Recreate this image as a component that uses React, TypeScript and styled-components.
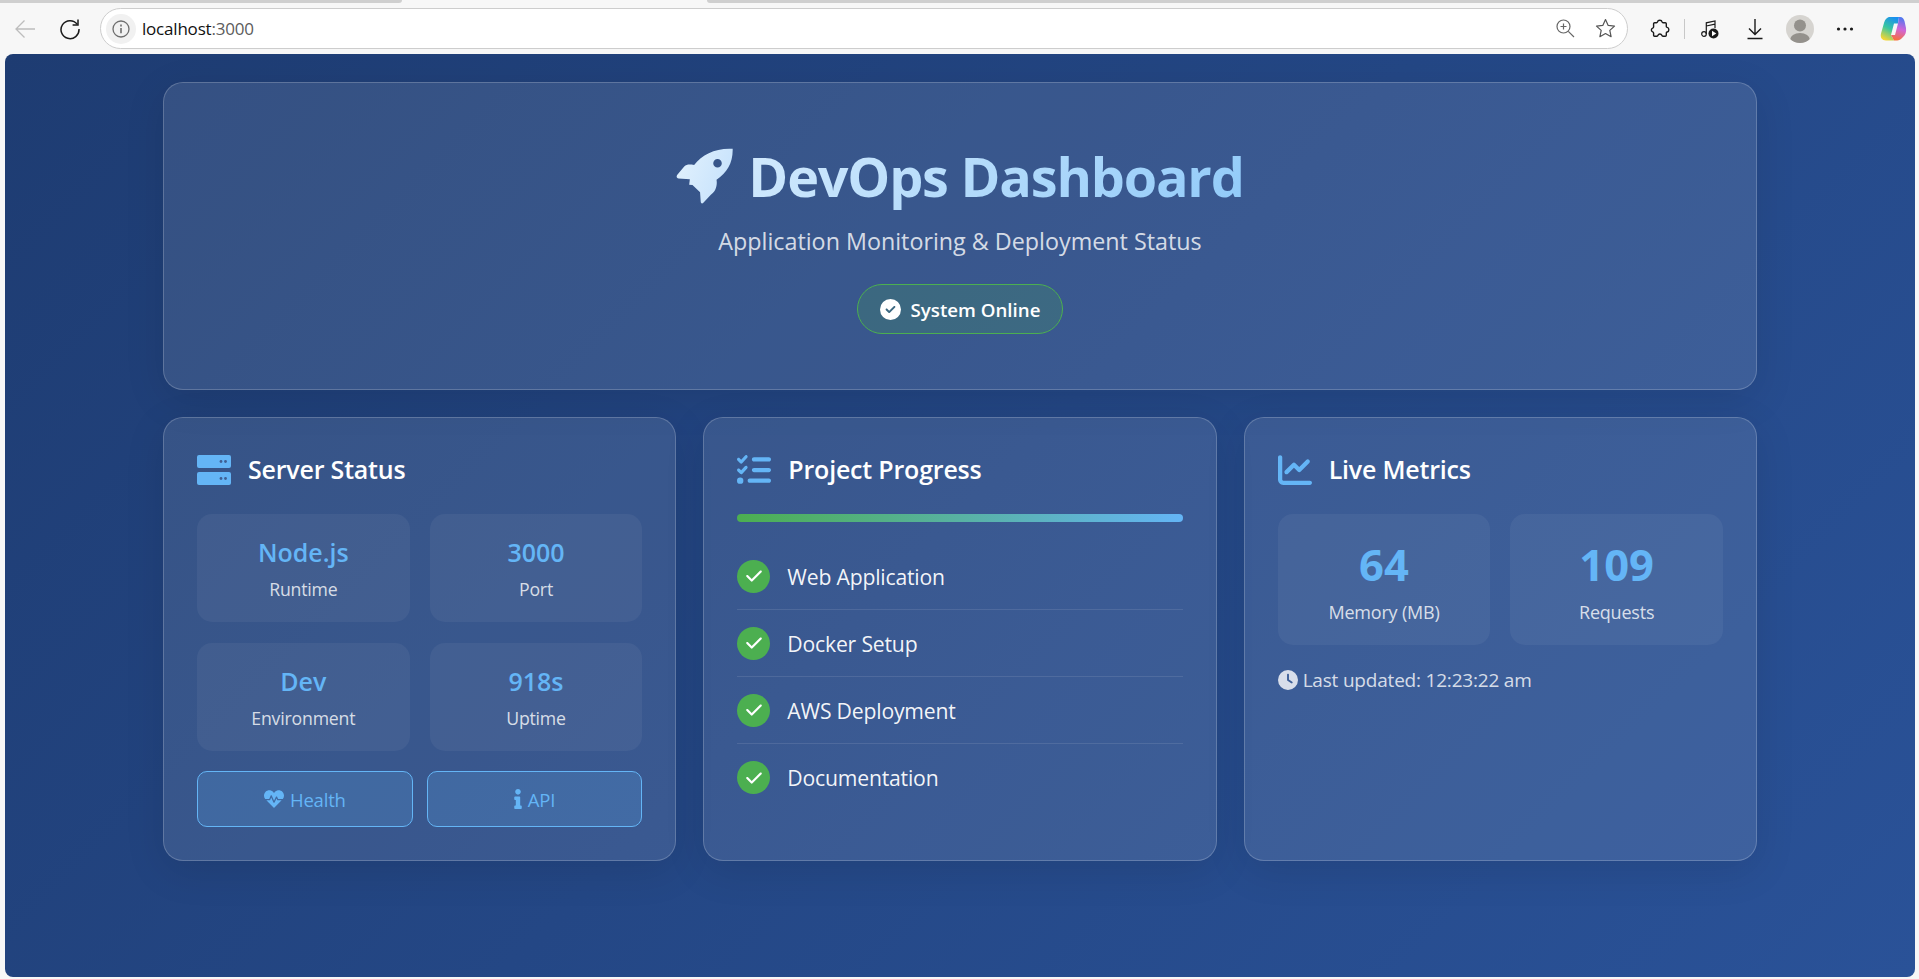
import React from 'react';
import styled, { createGlobalStyle } from 'styled-components';
import { FaHeartbeat, FaInfo } from 'react-icons/fa';
import { FaChartLine, FaCheck, FaCircleCheck, FaClock, FaListCheck } from 'react-icons/fa6';

const GlobalStyle = createGlobalStyle`
  * {
    box-sizing: border-box;
  }

  html,
  body {
    margin: 0;
    height: 979px;
    overflow: hidden;
    background: #f7f7f7;
    font-family: 'Open Sans', 'Noto Sans', sans-serif;
  }
`;

const Window = styled.div`
  display: flex;
  flex-direction: column;
  height: 979px;
`;

const TabStrip = styled.div`
  display: flex;
  height: 3px;
  background: #f7f7f7;
`;

const TabEdge = styled.div<{ $width?: number }>`
  flex: ${({ $width }) => ($width ? `0 0 ${$width}px` : '1')};
  background: #cfcfcf;
  border-radius: ${({ $width }) => ($width ? '0 0 6px 0' : '0 0 0 6px')};
`;

const TabGap = styled.div`
  flex: 0 0 305px;
`;

const Toolbar = styled.div`
  display: flex;
  align-items: center;
  height: 51px;
  padding: 0 4px 0 3px;
  background: #f7f7f7;
`;

const Slot = styled.div`
  flex: 0 0 44px;
  display: flex;
  align-items: center;
  justify-content: center;
`;

const CopilotSlot = styled(Slot)`
  margin-left: 3px;
`;

const NavButtons = styled.div`
  display: flex;
  gap: 1px;
  margin-right: 8px;
`;

const AddressBar = styled.div`
  flex: 1;
  display: flex;
  align-items: center;
  height: 41px;
  padding: 0 11px 0 5px;
  background: #fff;
  border: 1px solid #cdcdcd;
  border-radius: 21px;
`;

const SiteInfo = styled.div`
  flex: 0 0 30px;
  height: 30px;
  display: flex;
  align-items: center;
  justify-content: center;
  margin-right: 6px;
  background: #f1f1f1;
  border-radius: 50%;
`;

const Url = styled.div`
  flex: 1;
  font-size: 17px;
  color: #111;
  letter-spacing: -0.2px;
`;

const Port = styled.span`
  color: #5c5c5c;
`;

const AddressActions = styled.div`
  display: flex;
  align-items: center;
  gap: 20px;
`;

const ToolbarRight = styled.div`
  display: flex;
  align-items: center;
  gap: 1px;
  margin-left: 10px;
`;

const ToolbarDivider = styled.div`
  flex: 0 0 1px;
  height: 20px;
  margin: 0 2px 0 1px;
  background: #c8c8c8;
`;

const Avatar = styled.div`
  width: 28px;
  height: 28px;
  border-radius: 50%;
  overflow: hidden;
  background: #d6d4d0;
`;

const Page = styled.main`
  flex: 1;
  margin: 0 4px 2px 5px;
  padding: 28px 0;
  border-radius: 8px;
  background: linear-gradient(135deg, #1e3c72 0%, #2a5298 100%);
`;

const Container = styled.div`
  width: 1594px;
  margin: 0 auto;
  display: flex;
  flex-direction: column;
  gap: 27px;
`;

const Glass = styled.section`
  background: rgba(255, 255, 255, 0.1);
  border: 1px solid rgba(255, 255, 255, 0.2);
  border-radius: 20px;
  box-shadow: 0 10px 40px rgba(0, 0, 0, 0.1);
`;

const Header = styled(Glass)`
  display: flex;
  flex-direction: column;
  align-items: center;
  height: 308px;
  padding-top: 57px;
`;

const Title = styled.h1`
  display: flex;
  align-items: center;
  gap: 14px;
  height: 72px;
  margin: 0;
  font-size: 54px;
  line-height: 72px;
  font-weight: 700;
  letter-spacing: -1.2px;
`;

const TitleText = styled.span`
  background: linear-gradient(135deg, #d3eafd, #90caf9);
  -webkit-background-clip: text;
  background-clip: text;
  color: transparent;
`;

const Subtitle = styled.p`
  margin: 12px 0 0;
  font-size: 23.3px;
  line-height: 34px;
  color: rgba(255, 255, 255, 0.8);
`;

const StatusBadge = styled.div`
  display: flex;
  align-items: center;
  gap: 10px;
  height: 50px;
  margin-top: 26px;
  padding: 0 22px;
  font-size: 18.7px;
  font-weight: 600;
  color: #fff;
  background: rgba(76, 175, 80, 0.2);
  border: 1px solid #4caf50;
  border-radius: 25px;
`;

const Cards = styled.div`
  display: grid;
  grid-template-columns: repeat(3, 1fr);
  gap: 27px;
`;

const Card = styled(Glass)`
  height: 444px;
  padding: 32px 33px;
`;

const CardTitle = styled.h3`
  display: flex;
  align-items: center;
  gap: 17px;
  height: 40px;
  margin: 0 0 24px;
  font-size: 25px;
  font-weight: 600;
  color: #fff;
  letter-spacing: -0.2px;

  svg {
    flex: 0 0 34px;
    color: #64b5f6;
  }
`;

const CardTitleText = styled.span`
  margin-top: -3px;
`;

const StatGrid = styled.div`
  display: grid;
  grid-template-columns: repeat(2, 1fr);
  gap: 21px 20px;
`;

const StatBox = styled.div<{ $large?: boolean }>`
  display: flex;
  flex-direction: column;
  align-items: center;
  height: ${({ $large }) => ($large ? '131px' : '108px')};
  padding-top: ${({ $large }) => ($large ? '22px' : '19px')};
  background: rgba(255, 255, 255, 0.05);
  border-radius: 15px;
`;

const StatValue = styled.div<{ $large?: boolean }>`
  font-size: ${({ $large }) => ($large ? '43.5px' : '25px')};
  line-height: ${({ $large }) => ($large ? '58px' : '38px')};
  font-weight: ${({ $large }) => ($large ? 700 : 600)};
  color: #64b5f6;
`;

const StatLabel = styled.div<{ $large?: boolean }>`
  margin-top: 5px;
  font-size: ${({ $large }) => ($large ? '18px' : '17.7px')};
  line-height: 26px;
  letter-spacing: -0.2px;
  color: rgba(255, 255, 255, 0.8);
`;

const LinkRow = styled.div`
  display: flex;
  gap: 14px;
  margin-top: 20px;
`;

const LinkButton = styled.a`
  flex: 1;
  display: flex;
  align-items: center;
  justify-content: center;
  gap: 6px;
  height: 56px;
  font-size: 18.5px;
  letter-spacing: -0.2px;
  color: #64b5f6;
  background: rgba(100, 181, 246, 0.2);
  border: 1px solid #64b5f6;
  border-radius: 10px;
`;

const InfoGlyph = styled(FaInfo)`
  width: 8px;
  height: 20px;
`;

const ProgressTrack = styled.div`
  height: 8px;
  border-radius: 4px;
  background: linear-gradient(90deg, #4caf50, #64b5f6);
`;

const Checklist = styled.ul`
  list-style: none;
  margin: 21px 0 0;
  padding: 0;
`;

const ChecklistItem = styled.li`
  display: flex;
  align-items: center;
  gap: 17px;
  height: 67px;
  font-size: 21.2px;
  letter-spacing: -0.2px;
  color: rgba(255, 255, 255, 0.95);
  border-bottom: 1px solid rgba(255, 255, 255, 0.1);

  &:last-child {
    border-bottom: none;
  }
`;

const CheckDot = styled.span`
  flex: 0 0 33px;
  height: 33px;
  display: flex;
  align-items: center;
  justify-content: center;
  color: #fff;
  background: #4caf50;
  border-radius: 50%;
`;

const Updated = styled.div`
  display: flex;
  align-items: center;
  gap: 5px;
  margin-top: 21px;
  font-size: 19px;
  line-height: 28px;
  letter-spacing: -0.2px;
  color: rgba(255, 255, 255, 0.8);
`;

const BackIcon = () => (
  <svg width="22" height="22" viewBox="0 0 22 22" fill="none" stroke="#bdbdbd" strokeWidth="1.3">
    <path d="M21 11H2M10.5 2.5 2 11l8.5 8.5" />
  </svg>
);

const ReloadIcon = () => (
  <svg width="22" height="22" viewBox="0 0 22 22" fill="none" stroke="#1a1a1a" strokeWidth="1.5">
    <path d="M18.2 6.2A9 9 0 1 0 20 11" />
    <path d="M19 1.5v5.4h-5.4" />
  </svg>
);

const SiteInfoIcon = () => (
  <svg width="18" height="18" viewBox="0 0 18 18" fill="none" stroke="#6d6d6d" strokeWidth="1.3">
    <circle cx="9" cy="9" r="8" />
    <path d="M9 8v5.2" strokeWidth="1.6" />
    <path d="M9 4.6v1.8" strokeWidth="1.6" />
  </svg>
);

const ZoomIcon = () => (
  <svg width="19" height="19" viewBox="0 0 19 19" fill="none" stroke="#666" strokeWidth="1.2">
    <circle cx="7.5" cy="7.5" r="6.5" />
    <path d="M12.3 12.3 18 18M7.5 4.5v6M4.5 7.5h6" />
  </svg>
);

const StarIcon = () => (
  <svg width="21" height="21" viewBox="0 0 21 21" fill="none" stroke="#555" strokeWidth="1.2">
    <path d="m10.5 1.5 2.7 5.9 6.3.7-4.7 4.3 1.3 6.3-5.6-3.2-5.6 3.2 1.3-6.3L1.500 8.100l6.300-.7z" strokeLinejoin="round" />
  </svg>
);

const PuzzleIcon = () => (
  <svg width="20" height="20" viewBox="0 0 20 20" fill="none" stroke="#1a1a1a" strokeWidth="1.4" strokeLinejoin="round">
    <path d="M7.500 3c.4-2.400 4.200-2.400 4.600 0 .1.600.4.800 1 .8h2.200c.6 0 1 .4 1 1v2.700c0 .6.300.8.900.9 2.200.4 2.200 4.200 0 4.600-.6.100-.9.300-.9.900v2.300c0 .6-.4 1-1 1h-2.400c-.6 0-.9-.3-1.100-.9-.6-1.700-3.200-1.700-3.800 0-.2.600-.5.900-1.100.9H4.600c-.6 0-1-.4-1-1v-2.200c0-.6-.3-.9-.9-1.100-1.800-.6-1.800-3.200 0-3.800.6-.2.900-.5.900-1.100V4.800c0-.6.400-1 1-1h1.900c.6 0 .8-.2.900-.8z" />
  </svg>
);

const MediaIcon = () => (
  <svg width="20" height="20" viewBox="0 0 20 20" fill="none" stroke="#1a1a1a" strokeWidth="1.2">
    <circle cx="4" cy="15" r="2.300" />
    <path d="M6.300 15V3.800l8.700-1.800v7M6.300 7l8.700-1.800" />
    <circle cx="13.500" cy="14.500" r="5" fill="#1a1a1a" stroke="none" />
    <path d="M12 11.800v5.400l4.300-2.700z" fill="#fff" stroke="none" />
  </svg>
);

const DownloadIcon = () => (
  <svg width="18" height="22" viewBox="0 0 18 22" fill="none" stroke="#1a1a1a" strokeWidth="1.4">
    <path d="M9 1v15M3 10.500 9 16.500l6-6M1.500 20.500h15" />
  </svg>
);

const DotsIcon = () => (
  <svg width="18" height="4" viewBox="0 0 18 4" fill="#1a1a1a">
    <circle cx="2.500" cy="2" r="1.600" />
    <circle cx="9" cy="2" r="1.600" />
    <circle cx="15.500" cy="2" r="1.600" />
  </svg>
);

const AvatarIcon = () => (
  <svg width="28" height="28" viewBox="0 0 28 28" fill="#94918c">
    <circle cx="14" cy="10.500" r="6" />
    <ellipse cx="14" cy="25" rx="10" ry="7" />
  </svg>
);

const CopilotIcon = () => (
  <svg width="28" height="28" viewBox="0 0 28 28">
    <defs>
      <linearGradient id="copilotLeft" x1="0.7" y1="0" x2="0.3" y2="1">
        <stop offset="0" stopColor="#1a8ff0" />
        <stop offset="0.5" stopColor="#38c6a0" />
        <stop offset="1" stopColor="#f6d633" />
      </linearGradient>
      <linearGradient id="copilotRight" x1="0.6" y1="0" x2="0.4" y2="1">
        <stop offset="0" stopColor="#4a78f0" />
        <stop offset="0.5" stopColor="#d066d8" />
        <stop offset="1" stopColor="#f8703a" />
      </linearGradient>
    </defs>
    <path d="M11 2H20L19 8.500H15L12 20L15 25.500H7C3 25.500 1 22.500 2 18.500L5 8C6 4.500 8 2 11 2Z" fill="url(#copilotLeft)" />
    <path d="M19 8.500L20 2H21C23.500 2 25 4 25.600 6.500L27 13C27.500 17 26.500 20 24 22L22 24C20.500 25.500 18.500 25.500 17 25.500H15L12 20H16Z" fill="url(#copilotRight)" />
  </svg>
);

const RocketIcon = () => (
  <svg width="58" height="57" viewBox="20 16 176 172">
    <defs>
      <linearGradient id="rocketFill" x1="0" y1="0" x2="1" y2="0.4">
        <stop offset="0" stopColor="#e3f2fd" />
        <stop offset="1" stopColor="#c8e3fc" />
      </linearGradient>
    </defs>
    <path
      fillRule="evenodd"
      fill="url(#rocketFill)"
      d="M192 18C193 60 175 90 143 112C146 130 140 148 125 158L103 182C98 186 95 182 95 178L93 150L70 128L60 127L62 110L28 108C22 108 20 102 24 97L45 72C52 65 60 65 75 67C100 35 140 15 192 18ZM146 49A13 13 0 1 0 146 75A13 13 0 1 0 146 49Z"
    />
  </svg>
);

const ServerIcon = () => (
  <svg width="34" height="30" viewBox="0 0 34 30">
    <rect x="0" y="0" width="34" height="13" rx="2" fill="currentColor" />
    <rect x="0" y="17" width="34" height="13" rx="2" fill="currentColor" />
    <circle cx="24" cy="6.500" r="1.400" fill="#3f5f92" />
    <circle cx="28.500" cy="6.500" r="1.400" fill="#3f5f92" />
    <circle cx="24" cy="23.500" r="1.400" fill="#3f5f92" />
    <circle cx="28.500" cy="23.500" r="1.400" fill="#3f5f92" />
  </svg>
);

const stats = [
  { value: 'Node.js', label: 'Runtime' },
  { value: '3000', label: 'Port' },
  { value: 'Dev', label: 'Environment' },
  { value: '918s', label: 'Uptime' },
];

const metrics = [
  { value: '64', label: 'Memory (MB)' },
  { value: '109', label: 'Requests' },
];

const tasks = ['Web Application', 'Docker Setup', 'AWS Deployment', 'Documentation'];

const App = () => (
  <Window>
    <GlobalStyle />
    <TabStrip>
      <TabEdge $width={402} />
      <TabGap />
      <TabEdge />
    </TabStrip>
    <Toolbar>
      <NavButtons>
        <Slot>
          <BackIcon />
        </Slot>
        <Slot>
          <ReloadIcon />
        </Slot>
      </NavButtons>
      <AddressBar>
        <SiteInfo>
          <SiteInfoIcon />
        </SiteInfo>
        <Url>
          localhost<Port>:3000</Port>
        </Url>
        <AddressActions>
          <ZoomIcon />
          <StarIcon />
        </AddressActions>
      </AddressBar>
      <ToolbarRight>
        <Slot>
          <PuzzleIcon />
        </Slot>
        <ToolbarDivider />
        <Slot>
          <MediaIcon />
        </Slot>
        <Slot>
          <DownloadIcon />
        </Slot>
        <Slot>
          <Avatar>
            <AvatarIcon />
          </Avatar>
        </Slot>
        <Slot>
          <DotsIcon />
        </Slot>
        <CopilotSlot>
          <CopilotIcon />
        </CopilotSlot>
      </ToolbarRight>
    </Toolbar>
    <Page>
      <Container>
        <Header>
          <Title>
            <RocketIcon />
            <TitleText>DevOps Dashboard</TitleText>
          </Title>
          <Subtitle>Application Monitoring &amp; Deployment Status</Subtitle>
          <StatusBadge>
            <FaCircleCheck size={21} />
            System Online
          </StatusBadge>
        </Header>
        <Cards>
          <Card>
            <CardTitle>
              <ServerIcon />
              <CardTitleText>Server Status</CardTitleText>
            </CardTitle>
            <StatGrid>
              {stats.map((stat) => (
                <StatBox key={stat.label}>
                  <StatValue>{stat.value}</StatValue>
                  <StatLabel>{stat.label}</StatLabel>
                </StatBox>
              ))}
            </StatGrid>
            <LinkRow>
              <LinkButton>
                <FaHeartbeat size={20} />
                Health
              </LinkButton>
              <LinkButton>
                <InfoGlyph />
                API
              </LinkButton>
            </LinkRow>
          </Card>
          <Card>
            <CardTitle>
              <FaListCheck size={34} />
              <CardTitleText>Project Progress</CardTitleText>
            </CardTitle>
            <ProgressTrack />
            <Checklist>
              {tasks.map((task) => (
                <ChecklistItem key={task}>
                  <CheckDot>
                    <FaCheck size={18} />
                  </CheckDot>
                  {task}
                </ChecklistItem>
              ))}
            </Checklist>
          </Card>
          <Card>
            <CardTitle>
              <FaChartLine size={34} />
              <CardTitleText>Live Metrics</CardTitleText>
            </CardTitle>
            <StatGrid>
              {metrics.map((metric) => (
                <StatBox key={metric.label} $large>
                  <StatValue $large>{metric.value}</StatValue>
                  <StatLabel $large>{metric.label}</StatLabel>
                </StatBox>
              ))}
            </StatGrid>
            <Updated>
              <FaClock size={20} />
              Last updated: 12:23:22 am
            </Updated>
          </Card>
        </Cards>
      </Container>
    </Page>
  </Window>
);

export default App;
